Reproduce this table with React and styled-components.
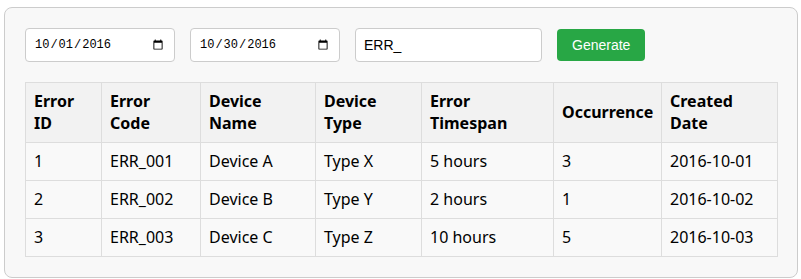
import styled, { createGlobalStyle } from "styled-components";

const GlobalStyle = createGlobalStyle`
  body {
    margin: 0;
    background: #fff;
    font-family: "Noto Sans", "Open Sans", sans-serif;
  }
`;

const COLUMNS = [
  { label: "Error ID", width: 76 },
  { label: "Error Code", width: 99 },
  { label: "Device Name", width: 115 },
  { label: "Device Type", width: 106 },
  { label: "Error Timespan", width: 132 },
  { label: "Occurrence", width: 108 },
  { label: "Created Date", width: 116 },
];

const ROWS = [
  [1, "ERR_001", "Device A", "Type X", "5 hours", 3, "2016-10-01"],
  [2, "ERR_002", "Device B", "Type Y", "2 hours", 1, "2016-10-02"],
  [3, "ERR_003", "Device C", "Type Z", "10 hours", 5, "2016-10-03"],
];

const Panel = styled.div`
  margin: 7px 3px 0 4px;
  padding: 20px;
  background: #f8f8f8;
  border: 1px solid #ccc;
  border-radius: 8px;
`;

const Filters = styled.form`
  display: flex;
  align-items: center;
  gap: 15px;
  margin-bottom: 20px;
`;

const Field = styled.input`
  box-sizing: border-box;
  width: ${({ $width }) => $width}px;
  height: 34px;
  padding: 0 8px;
  border: 1px solid #ccc;
  border-radius: 4px;
  background: #fff;
  color: #000;
  font-family: ${({ type }) =>
    type === "date" ? '"Liberation Mono", monospace' : '"Liberation Sans", Arial, sans-serif'};
  font-size: ${({ type }) => (type === "date" ? "12px" : "14px")};
`;

const Button = styled.button`
  height: 32px;
  padding: 0 15px;
  border: none;
  border-radius: 4px;
  background: #28a745;
  color: #fff;
  font-family: "Liberation Sans", Arial, sans-serif;
  font-size: 14px;
  cursor: pointer;
`;

const Table = styled.table`
  width: 100%;
  table-layout: fixed;
  border-collapse: collapse;
  font-size: 16px;
  line-height: 21px;
  color: #000;
`;

const Head = styled.th`
  padding: 8px;
  border: 1px solid #ddd;
  background: #f2f2f2;
  text-align: left;
  font-weight: 700;
  line-height: 21.5px;
`;

const Cell = styled.td`
  padding: 8px;
  border: 1px solid #ddd;
  background: #f9f9f9;
`;

export default function App() {
  return (
    <>
      <GlobalStyle />
      <Panel>
        <Filters onSubmit={e => e.preventDefault()}>
          <Field type="date" $width={150} defaultValue="2016-10-01" />
          <Field type="date" $width={150} defaultValue="2016-10-30" />
          <Field type="text" $width={187} defaultValue="ERR_" />
          <Button type="submit">Generate</Button>
        </Filters>
        <Table>
          <colgroup>
            {COLUMNS.map(col => (
              <col key={col.label} style={{ width: col.width }} />
            ))}
          </colgroup>
          <thead>
            <tr>
              {COLUMNS.map(col => (
                <Head key={col.label}>{col.label}</Head>
              ))}
            </tr>
          </thead>
          <tbody>
            {ROWS.map(row => (
              <tr key={row[0]}>
                {row.map((value, i) => (
                  <Cell key={i}>{value}</Cell>
                ))}
              </tr>
            ))}
          </tbody>
        </Table>
      </Panel>
    </>
  );
}
